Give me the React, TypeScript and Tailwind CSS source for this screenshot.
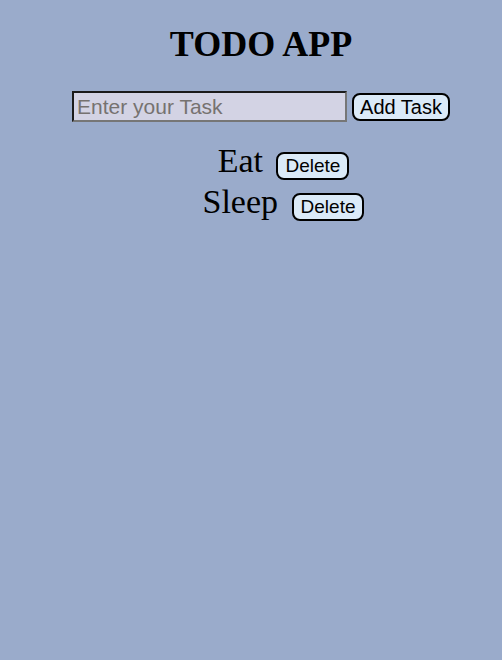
import React, { useState } from "react";

export default function App() {
  const [tasks, setTasks] = useState<string[]>(["Eat", "Sleep"]);
  const [value, setValue] = useState("");

  const add = () => {
    if (!value.trim()) return;
    setTasks([...tasks, value.trim()]);
    setValue("");
  };

  return (
    <div className="min-h-[660px] bg-[#9aabcb] pl-[20px] text-center text-black">
      <h1 className="m-0 pt-[24px] font-['Liberation_Serif',serif] text-[36px] font-bold leading-[40px]">
        TODO APP
      </h1>
      <div className="mt-[27px] flex items-center justify-center gap-[5px]">
        <input
          value={value}
          onChange={(e) => setValue(e.target.value)}
          placeholder="Enter your Task"
          className="box-border h-[31px] w-[275px] border-2 border-t-[#1b1b1b] border-l-[#1b1b1b] border-b-[#767676] border-r-[#767676] bg-[#d3d3e4] px-[3px] font-['Liberation_Sans',sans-serif] text-[21px] text-black outline-none placeholder:text-[#767270]"
        />
        <button
          onClick={add}
          className="box-border rounded-[8px] border-2 border-black bg-[#dbeaf8] px-[6px] py-[1px] font-['Liberation_Sans',sans-serif] text-[20px] leading-[22px] text-black"
        >
          Add Task
        </button>
      </div>
      <ul className="m-0 mt-[18px] list-none pl-[45px]">
        {tasks.map((t, i) => (
          <li
            key={i}
            className="font-['Liberation_Serif',serif] text-[34px] leading-[41px]"
          >
            {t}{" "}
            <button
              onClick={() => setTasks(tasks.filter((_, j) => j !== i))}
              className="ml-[5px] box-border rounded-[8px] border-2 border-black bg-[#dbeaf8] px-[7px] py-[1px] align-baseline font-['Liberation_Sans',sans-serif] text-[19px] leading-[22px] text-black"
            >
              Delete
            </button>
          </li>
        ))}
      </ul>
    </div>
  );
}
